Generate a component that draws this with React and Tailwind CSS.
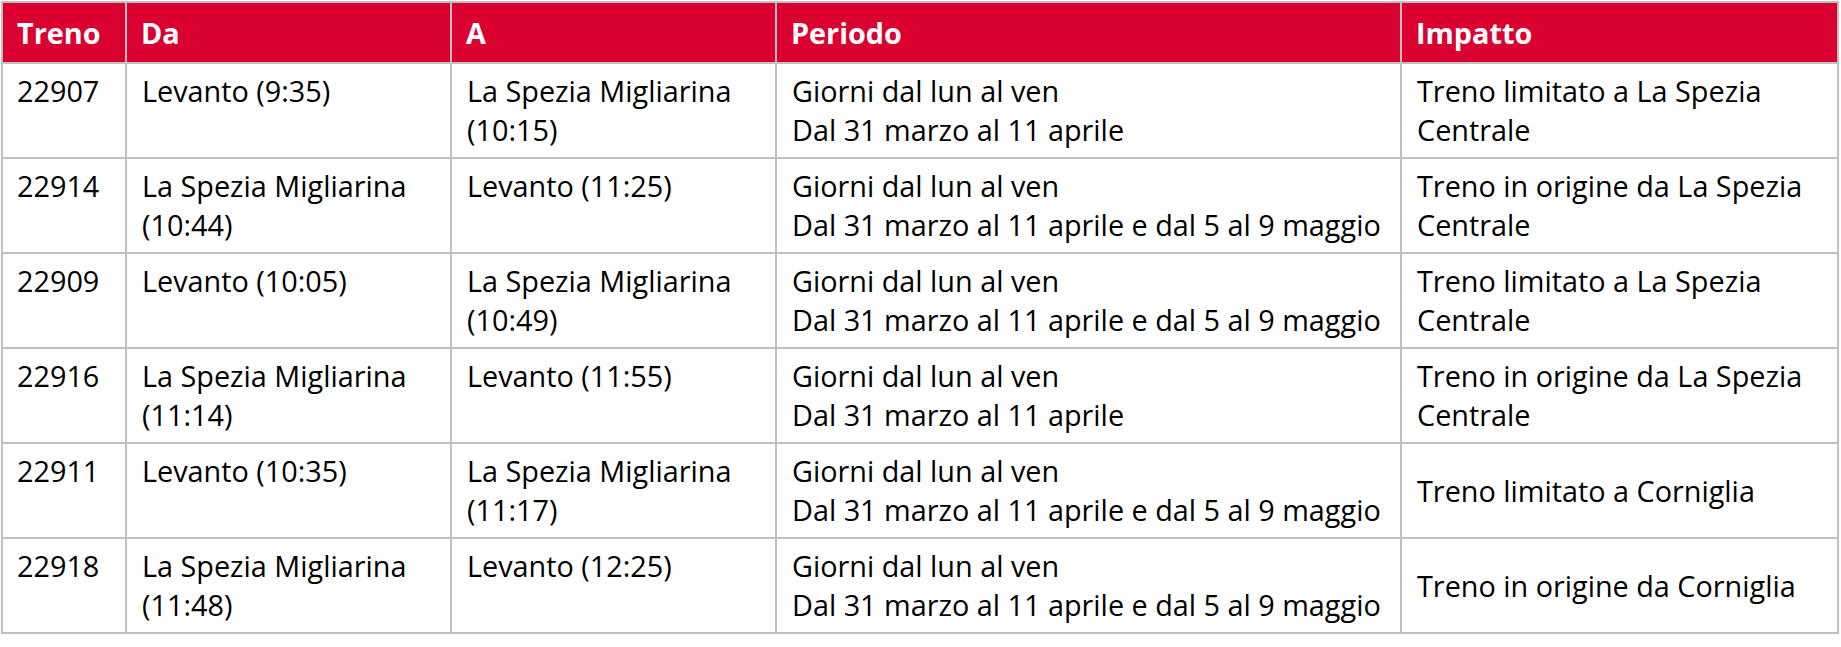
import React from "react";

const rows = [
  ["22907", ["Levanto (9:35)"], ["La Spezia Migliarina", "(10:15)"], ["Giorni dal lun al ven", "Dal 31 marzo al 11 aprile"], ["Treno limitato a La Spezia", "Centrale"]],
  ["22914", ["La Spezia Migliarina", "(10:44)"], ["Levanto (11:25)"], ["Giorni dal lun al ven", "Dal 31 marzo al 11 aprile e dal 5 al 9 maggio"], ["Treno in origine da La Spezia", "Centrale"]],
  ["22909", ["Levanto (10:05)"], ["La Spezia Migliarina", "(10:49)"], ["Giorni dal lun al ven", "Dal 31 marzo al 11 aprile e dal 5 al 9 maggio"], ["Treno limitato a La Spezia", "Centrale"]],
  ["22916", ["La Spezia Migliarina", "(11:14)"], ["Levanto (11:55)"], ["Giorni dal lun al ven", "Dal 31 marzo al 11 aprile"], ["Treno in origine da La Spezia", "Centrale"]],
  ["22911", ["Levanto (10:35)"], ["La Spezia Migliarina", "(11:17)"], ["Giorni dal lun al ven", "Dal 31 marzo al 11 aprile e dal 5 al 9 maggio"], ["Treno limitato a Corniglia"]],
  ["22918", ["La Spezia Migliarina", "(11:48)"], ["Levanto (12:25)"], ["Giorni dal lun al ven", "Dal 31 marzo al 11 aprile e dal 5 al 9 maggio"], ["Treno in origine da Corniglia"]],
];

const headers = ["Treno", "Da", "A", "Periodo", "Impatto"];

function Lines({ lines }) {
  return lines.map((l, i) => (
    <div key={i} className="whitespace-nowrap">
      {l}
    </div>
  ));
}

export default function App() {
  return (
    <div className="bg-white w-[1841px] h-[647px] pl-[1px] pt-[1px]" style={{ fontFamily: '"Open Sans", "Noto Sans", sans-serif' }}>
      <table className="table-fixed border-collapse w-[1838px] text-[28.8px] leading-[39px] text-black">
        <colgroup>
          <col className="w-[124px]" />
          <col className="w-[325px]" />
          <col className="w-[325px]" />
          <col className="w-[625px]" />
          <col className="w-[437px]" />
        </colgroup>
        <thead>
          <tr className="h-[61px] bg-[#da0030]">
            {headers.map((h) => (
              <th key={h} className="border-2 border-[#c0c0c0] text-left align-middle font-bold text-white pl-[14px] pr-2 py-0">
                {h}
              </th>
            ))}
          </tr>
        </thead>
        <tbody>
          {rows.map((r) => (
            <tr key={r[0]} className="h-[95px]">
              <td className="border-2 border-[#c0c0c0] align-top pl-[14px] pr-2 pt-[7px] pb-[8px]">{r[0]}</td>
              <td className="border-2 border-[#c0c0c0] align-top pl-[15px] pr-2 pt-[7px] pb-[8px]"><Lines lines={r[1]} /></td>
              <td className="border-2 border-[#c0c0c0] align-top pl-[15px] pr-2 pt-[7px] pb-[8px]"><Lines lines={r[2]} /></td>
              <td className="border-2 border-[#c0c0c0] align-top pl-[15px] pr-2 pt-[7px] pb-[8px]"><Lines lines={r[3]} /></td>
              <td className="border-2 border-[#c0c0c0] align-middle pl-[15px] pr-2 pt-[7px] pb-[8px]"><Lines lines={r[4]} /></td>
            </tr>
          ))}
        </tbody>
      </table>
    </div>
  );
}
